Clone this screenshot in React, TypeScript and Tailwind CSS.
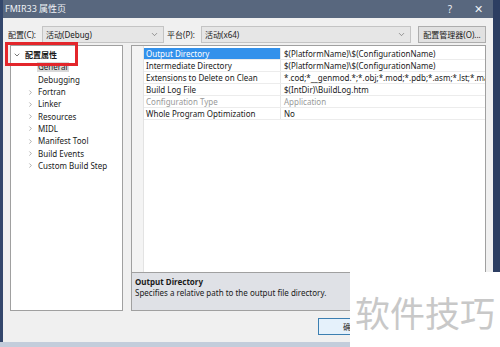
import { ChevronDown, ChevronRight } from "lucide-react";

const font = { fontFamily: '"Noto Sans", "Noto Sans CJK SC", sans-serif' };

const treeChildren = [
  { label: "General", expandable: false, selected: true },
  { label: "Debugging", expandable: false },
  { label: "Fortran", expandable: true },
  { label: "Linker", expandable: true },
  { label: "Resources", expandable: true },
  { label: "MIDL", expandable: true },
  { label: "Manifest Tool", expandable: true },
  { label: "Build Events", expandable: true },
  { label: "Custom Build Step", expandable: true },
];

const properties = [
  { name: "Output Directory", value: "$(PlatformName)\\$(ConfigurationName)", selected: true },
  { name: "Intermediate Directory", value: "$(PlatformName)\\$(ConfigurationName)" },
  { name: "Extensions to Delete on Clean", value: "*.cod;*__genmod.*;*.obj;*.mod;*.pdb;*.asm;*.lst;*.map;*.dbg" },
  { name: "Build Log File", value: "$(IntDir)\\BuildLog.htm" },
  { name: "Configuration Type", value: "Application", disabled: true },
  { name: "Whole Program Optimization", value: "No" },
];

const Combo = ({ value, width }: { value: string; width: string }) => (
  <div className={`flex h-[17px] items-center justify-between border border-[#c4c4c4] bg-[#e6e6e6] pl-[3px] pr-[4px] ${width}`}>
    <span>{value}</span>
    <ChevronDown className="h-[9px] w-[9px] text-[#555]" strokeWidth={1.5} />
  </div>
);

export default function App() {
  return (
    <div className="relative flex h-[347px] w-[500px] flex-col overflow-hidden bg-[#2c3e62] text-[8px] text-[#1a1a1a]" style={font}>
      <div className="flex h-[342px]">
        <div className="w-[3px] bg-[#34476c]" />
        <div className="flex w-[490px] flex-col">
          {/* title bar */}
          <div className="flex h-[18px] items-center bg-[#58677e] pl-[2px] pr-[10px] text-[9px] text-[#eef1f5]">
            <span className="flex-1">FMIR33 属性页</span>
            <span className="mr-[22px] text-[10px]">?</span>
            <span className="text-[11px]">✕</span>
          </div>

          <div className="flex flex-1 flex-col bg-[#f0f0f0] px-[7px] pt-[8px]">
            {/* configuration row */}
            <div className="flex h-[17px] items-center">
              <span className="-ml-[2px] w-[34px] whitespace-nowrap">配置(C):</span>
              <Combo value="活动(Debug)" width="w-[122px]" />
              <span className="ml-[3px] w-[34px] whitespace-nowrap">平台(P):</span>
              <Combo value="活动(x64)" width="w-[210px]" />
              <div className="ml-[7px] flex h-[17px] w-[68px] items-center justify-center border border-[#adadad] bg-[#e1e1e1]">
                配置管理器(O)...
              </div>
            </div>

            {/* panels */}
            <div className="mt-[2px] flex h-[266px] gap-[8px]">
              <div className="w-[114px] border border-[#a0a0a0] bg-white pt-[3px]">
                <div className="flex h-[12.3px] items-center pl-[2px]">
                  <ChevronDown className="h-[8px] w-[8px] text-[#333]" strokeWidth={2} />
                  <span className="ml-[4px] font-bold">配置属性</span>
                </div>
                {treeChildren.map((item) => (
                  <div key={item.label} className="flex h-[12.3px] items-center pl-[16px]">
                    <span className="flex w-[10px] justify-start">
                      {item.expandable ? <ChevronRight className="h-[7px] w-[7px] text-[#777]" strokeWidth={2} /> : null}
                    </span>
                    <span className={item.selected ? "bg-[#d9d9d9] px-[1px] leading-[10px]" : "px-[1px] leading-[10px]"}>{item.label}</span>
                  </div>
                ))}
              </div>

              <div className="flex w-[355px] flex-col">
                <div className="flex h-[228px] border border-[#a0a0a0] bg-white">
                  <div className="w-[12px] border-r border-[#e3e3e3] bg-[#f4f4f4]" />
                  <div className="flex-1 overflow-hidden pt-[2px]">
                    {properties.map((row) => (
                      <div key={row.name} className="flex h-[12px] border-b border-[#ececec]">
                        <div
                          className={`flex w-[137px] shrink-0 items-center border-r border-[#e6e6e6] pl-[2px] ${
                            row.selected ? "bg-[#3391eb] text-white" : row.disabled ? "text-[#9a9a9a]" : ""
                          }`}
                        >
                          {row.name}
                        </div>
                        <div className={`flex items-center whitespace-nowrap pl-[3px] ${row.disabled ? "text-[#9a9a9a]" : ""}`}>
                          {row.value}
                        </div>
                      </div>
                    ))}
                  </div>
                </div>
                <div className="flex h-[38px] flex-col border border-t-0 border-[#a0a0a0] bg-[#dfe1e6] px-[3px] pt-[3px]">
                  <span className="font-bold leading-[11px]">Output Directory</span>
                  <span className="leading-[11px]">Specifies a relative path to the output file directory.</span>
                </div>
              </div>
            </div>

            {/* buttons */}
            <div className="mt-[7px] flex pl-[308px]">
              <div className="flex h-[17px] w-[66px] items-center justify-center border border-[#3c7fb1] bg-[#e5f1fb]">确定</div>
            </div>
          </div>
        </div>
        <div className="flex-1 bg-[#2c3e62]" />
      </div>
      <div className="h-[5px] bg-[#c3cddb]" />

      {/* highlight annotation */}
      <div className="absolute left-[5px] top-[42px] h-[24px] w-[73px] border-[3px] border-[#e3262b]" />

      {/* watermark */}
      <div
        className="absolute left-[350px] top-[272px] flex h-[75px] w-[150px] items-center justify-center bg-white pt-[6px] text-[35px] text-[#c8c8c8]"
        style={{ fontFamily: '"Noto Sans CJK SC", sans-serif' }}
      >
        软件技巧
      </div>
    </div>
  );
}
